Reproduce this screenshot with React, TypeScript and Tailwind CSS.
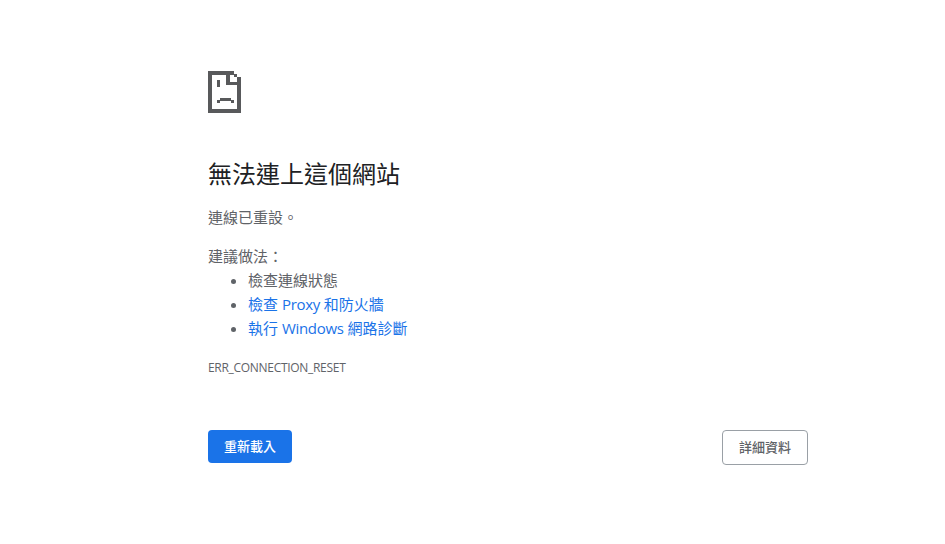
import React from 'react'

const font = "font-['Open_Sans','Noto_Sans_CJK_TC',sans-serif]"

function SadFileIcon() {
  return (
    <svg width="33" height="42" viewBox="0 0 33 42" fill="#58595b" shapeRendering="crispEdges" className="block">
      {/* outline */}
      <path d="M0 0h26v4H4v34h25V6h4v36H0z" />
      {/* folded corner */}
      <path d="M18 4h4v7h11v3H18zM26 3h3v3h-3z" />
      {/* eye */}
      <path d="M9 9h3v7H9z" />
      {/* frown */}
      <path d="M9 29h3v3H9zM12 27h11v3H12zM23 29h3v3h-3z" />
    </svg>
  )
}

export default function App() {
  return (
    <div className={`h-[544px] w-[945px] overflow-hidden bg-white text-[15px] leading-[24px] text-[#5f6368] ${font}`}>
      <div className="ml-[208px] flex w-[600px] flex-col pt-[71px]">
        <SadFileIcon />

        <h1 className="mt-[45px] text-[24px] leading-[32px] font-normal text-[#202124]">無法連上這個網站</h1>

        <p className="mt-[15px]">連線已重設。</p>

        <p className="mt-[15px]">建議做法：</p>
        <ul className="list-disc pl-[40px]">
          <li>檢查連線狀態</li>
          <li>
            <span className="text-[#1a73e8]">檢查 <span className="tracking-[-0.3px]">Proxy</span> 和防火牆</span>
          </li>
          <li>
            <span className="text-[#1a73e8]">執行 <span className="tracking-[-0.3px]">Windows</span> 網路診斷</span>
          </li>
        </ul>

        <div className="mt-[16px] text-[12px] leading-[24px] tracking-[-0.3px]">ERR_CONNECTION_RESET</div>

        <div className="mt-[50px] flex items-start justify-between">
          <button className="h-[33px] w-[84px] rounded-[4px] bg-[#1a73e8] pb-[1px] text-[13px] font-medium text-white">
            重新載入
          </button>
          <button className="h-[35px] w-[86px] rounded-[4px] border border-[#9aa0a6] bg-white pb-[1px] text-[13px] font-medium text-[#5f6368]">
            詳細資料
          </button>
        </div>
      </div>
    </div>
  )
}
